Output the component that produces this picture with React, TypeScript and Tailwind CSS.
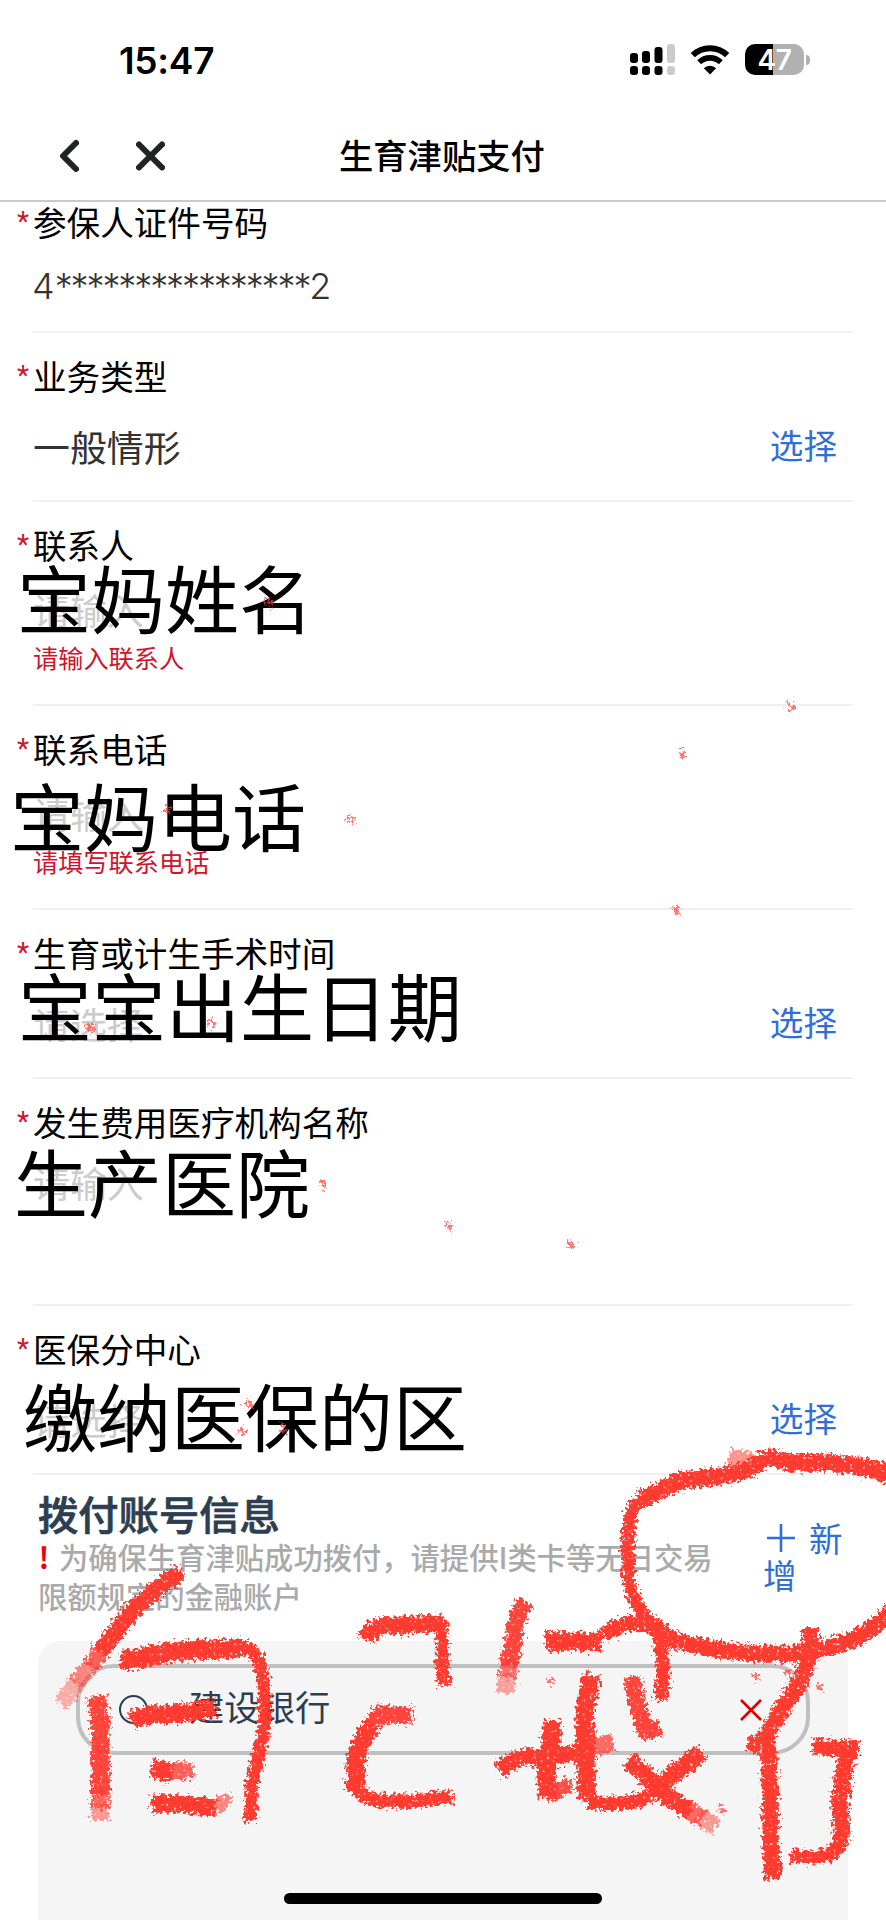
interface Field {
  label: string
  height: string
  value?: string
  placeholder?: string
  valueClass: string
  error?: string
  select?: boolean
}

const fields: Field[] = [
  { label: "业务类型", height: "h-[169px]", value: "一般情形", valueClass: "mt-[31px]", select: true },
  { label: "联系人", height: "h-[204px]", placeholder: "请输入", valueClass: "mt-[25px]", error: "请输入联系人" },
  { label: "联系电话", height: "h-[204px]", placeholder: "请输入", valueClass: "mt-[25px]", error: "请填写联系电话" },
  { label: "生育或计生手术时间", height: "h-[169px]", placeholder: "请选择", valueClass: "mt-[31px]", select: true },
  { label: "发生费用医疗机构名称", height: "h-[227px]", placeholder: "请输入", valueClass: "mt-[21px]" },
  { label: "医保分中心", height: "h-[169px]", placeholder: "请选择", valueClass: "mt-[31px]", select: true },
]

// Large captions laid over the form
const captions = [
  { text: "宝妈姓名", place: "left-[17px] top-[556px]" },
  { text: "宝妈电话", place: "left-[10px] top-[774px]" },
  { text: "宝宝出生日期", place: "left-[18px] top-[964px]" },
  { text: "生产医院", place: "left-[14px] top-[1140px]" },
  { text: "缴纳医保的区", place: "left-[23px] top-[1374px]" },
]

// Crayon strokes: [path, width, opacity]
const strokes: [string, number, number][] = [
  // circle round the add button
  ["M892 1476 Q875 1468 850 1465 T790 1463 L771 1457 L753 1466 Q735 1475 715 1477 T683 1480 Q668 1486 656 1492 L640 1500", 14, 1],
  ["M656 1492 Q634 1500 631 1514 Q627 1535 628 1570 Q629 1590 637 1604 Q645 1617 657 1627", 9, 1],
  ["M653 1624 Q665 1640 690 1644 Q735 1655 790 1654 Q830 1650 858 1637 Q878 1627 892 1610", 13, 1],
  ["M729 1458 L755 1463", 15, 0.55],
  // 自
  ["M181 1572 Q150 1592 131 1612 L100 1652", 14, 1],
  ["M107 1643 L90 1666", 14, 0.8],
  ["M92 1663 L76 1684", 14, 0.6],
  ["M78 1681 L61 1704", 14, 0.4],
  ["M121 1659 Q138 1660 150 1656 T200 1650 T242 1648", 16, 1],
  ["M240 1646 Q261 1650 263 1680 Q267 1715 263 1735 Q257 1760 252 1785 L250 1822", 9, 1],
  ["M97 1696 Q102 1725 100 1745 L101 1795", 15, 0.95],
  ["M101 1790 L100 1808", 15, 0.75],
  ["M100 1804 L100 1820", 15, 0.5],
  ["M132 1721 Q145 1714 165 1714 T216 1708", 15, 1],
  ["M152 1768 L172 1773", 15, 1],
  ["M168 1772 L193 1770", 13, 0.8],
  ["M152 1804 Q185 1803 216 1808", 14, 1],
  ["M212 1807 Q224 1806 224 1795", 11, 0.6],
  // 己
  ["M366 1639 Q371 1628 383 1626 L443 1623", 14, 1],
  ["M442 1620 L442 1655 L444 1686", 9, 1],
  ["M412 1716 L380 1714 L373 1724", 14, 0.95],
  ["M374 1725 Q360 1738 356 1760 L355 1790", 15, 1],
  ["M355 1786 Q363 1799 378 1800 Q410 1803 430 1799 L452 1797", 10, 1],
  // 的
  ["M526 1602 Q514 1618 514 1640 L509 1665", 14, 0.95],
  ["M510 1661 L508 1678", 14, 0.7],
  ["M508 1675 L505 1693", 14, 0.45],
  ["M545 1641 L602 1642", 15, 1],
  ["M604 1635 Q618 1624 632 1623 L653 1625", 12, 1],
  ["M650 1624 Q662 1635 662 1655 L663 1680 L660 1700", 10, 1],
  ["M593 1675 Q583 1705 585 1725 L587 1800", 15, 1],
  ["M588 1802 Q628 1807 648 1796 Q663 1784 676 1772", 10, 1],
  ["M666 1780 L702 1752", 14, 1],
  ["M499 1771 Q518 1754 535 1758 Q560 1757 590 1749", 13, 1],
  ["M588 1749 L613 1742", 14, 0.75],
  ["M552 1721 Q552 1748 546 1768 L548 1798", 15, 1],
  ["M547 1796 L571 1784", 12, 0.9],
  ["M632 1677 Q638 1712 646 1732 L660 1727", 13, 0.95],
  ["M628 1760 Q650 1778 658 1787 Q672 1802 690 1811", 14, 1],
  ["M686 1809 L702 1818", 14, 0.75],
  ["M699 1816 L716 1827", 14, 0.5],
  // 行
  ["M811 1628 Q811 1655 803 1675 Q797 1688 785 1704 L763 1741", 13, 1],
  ["M748 1743 L767 1747 Q770 1765 770 1790 L771 1845 L773 1879", 13, 1],
  ["M813 1747 L859 1749", 13, 1],
  ["M847 1753 Q843 1775 840 1800 L842 1840", 14, 1],
  ["M842 1834 Q841 1851 828 1855 Q810 1859 791 1856", 10, 1],
]

const specks = [
  [791, 706], [682, 754], [676, 910], [449, 1226], [571, 1244], [351, 820], [167, 810],
  [91, 1029], [212, 1023], [269, 602], [323, 1185], [248, 1404], [243, 1432], [283, 1428],
  [550, 1681], [756, 1677], [788, 1673], [820, 1688], [721, 1809],
]

function StatusBar() {
  return (
    <div className="flex h-[110px] items-center pt-[9px] pl-[119px] pr-[76px]">
      <span className="mt-[2px] font-[Inter] text-[37px] font-semibold leading-none tracking-[-0.300px]">15:47</span>
      <svg className="ml-auto" width="45" height="32" viewBox="0 0 45 32">
        <rect x="0" y="9" width="8" height="10" rx="3" />
        <rect x="12" y="7" width="8" height="12" rx="3" />
        <rect x="24.5" y="3" width="8" height="16" rx="3" />
        <rect x="37" y="0" width="8" height="19" rx="3" fill="#cbcbcb" />
        <rect x="0" y="22" width="8" height="9" rx="3" />
        <rect x="12" y="22" width="8" height="9" rx="3" />
        <rect x="24.5" y="22" width="8" height="9" rx="3" />
        <rect x="37" y="22" width="8" height="9" rx="3" fill="#cbcbcb" />
      </svg>
      <svg className="ml-[15px]" width="40" height="30" viewBox="0 0 40 30">
        <path d="M2.800 10.200a24.600 24.600 0 0 1 34.400 0" fill="none" stroke="#000" strokeWidth="6" />
        <path d="M9.200 17.200a15.600 15.600 0 0 1 21.600 0" fill="none" stroke="#000" strokeWidth="5.600" />
        <path d="M20 29.500l-6.200-6.200a8.800 8.800 0 0 1 12.400 0z" />
      </svg>
      <div className="ml-[15px] flex h-[31px] w-[59px] items-center justify-center rounded-[10px] bg-[linear-gradient(90deg,#000_28px,#b1b1b1_28px)]">
        <span className="font-[Inter] text-[28px] font-semibold leading-none tracking-[-0.500px] text-white">47</span>
      </div>
      <div className="ml-[2px] h-[10px] w-[4px] rounded-r-full bg-[#b1b1b1]" />
    </div>
  )
}

function NavBar() {
  return (
    <div className="flex h-[92px] items-center border-b-2 border-[#c9cacb] pl-[59px]">
      <svg className="mt-[2px]" width="20" height="34" viewBox="0 0 20 34" fill="none" stroke="#222325" strokeWidth="6" strokeLinecap="round" strokeLinejoin="round">
        <path d="M17 4L4 17l13 13" />
      </svg>
      <svg className="ml-[57px] mt-[2px]" width="29" height="30" viewBox="0 0 29 30" fill="none" stroke="#222325" strokeWidth="6" strokeLinecap="round">
        <path d="M3 3.500l23 23M26 3.500l-23 23" />
      </svg>
      <h1 className="-mt-[2px] ml-[174px] text-[34.300px] font-medium leading-[40px]">生育津贴支付</h1>
    </div>
  )
}

function FieldLabel({ text }: { text: string }) {
  return (
    <div className="flex h-[34px] items-center">
      <span className="-ml-[16px] w-[16px] font-[Roboto] text-[28px] leading-[34px] text-[#d0142c]">*</span>
      <span className="text-[33.600px] leading-[30px]">{text}</span>
    </div>
  )
}

function FormField({ field }: { field: Field }) {
  return (
    <div className={`mx-[33px] border-b-2 border-[#f0f0f0] pt-[26px] ${field.height}`}>
      <FieldLabel text={field.label} />
      <div className={`flex items-center justify-between pr-[16px] text-[36.900px] leading-[44px] ${field.valueClass}`}>
        {field.value && <span className="text-[#333]">{field.value}</span>}
        {field.placeholder && <span className="text-[#ccc]">{field.placeholder}</span>}
        {field.select && <button className="-mt-[3px] text-[33.600px] leading-[40px] text-[#2f6fd6]">选择</button>}
      </div>
      {field.error && <p className="mt-[11px] text-[25.200px] leading-[30px] text-[#d0142c]">{field.error}</p>}
    </div>
  )
}

function AccountSection() {
  return (
    <section>
      <div className="flex h-[166px] pl-[38px] pr-[34px] pt-[18px]">
        <div className="w-[690px]">
          <h2 className="text-[40.300px] font-medium leading-[40px] text-[#2c3e50] [-webkit-text-stroke:0.700px_#2c3e50]">拨付账号信息</h2>
          <p className="mt-[4px] whitespace-nowrap text-[29.300px] font-medium leading-[38.500px] text-[#aaa]">
            <span className="mr-[9px] inline-block w-[12px] text-center font-bold text-[#f00000]">!</span>
            为确保生育津贴成功拨付，请提供I类卡等无日交易
            <br />
            限额规定的金融账户
          </p>
        </div>
        <button className="ml-[35px] mt-[25px] flex h-[76px] w-[88px] flex-wrap items-center gap-x-[14px] text-left text-[33.600px] leading-[36px] text-[#2f6fd6]">
          <svg className="ml-[4px]" width="28" height="28" viewBox="0 0 28 28" stroke="currentColor" strokeWidth="2.600">
            <path d="M14 0v28M0 14h28" />
          </svg>
          <span>新</span>
          <span className="-mt-[2px]">增</span>
        </button>
      </div>
      <div className="mx-[38px] h-[280px] rounded-t-[22px] bg-[#f5f5f5] px-[38px] pt-[23px]">
        <div className="flex h-[91px] items-center rounded-[38px] border-4 border-[#c0c0c0] pl-[39px] pr-[44px]">
          <span className="h-[29px] w-[29px] rounded-full border-2 border-[#2c3e50]" />
          <span className="-mt-[7px] ml-[41px] text-[35.300px] leading-[40px] text-[#2c3e50]">建设银行</span>
          <svg className="ml-auto" width="22" height="22" viewBox="0 0 22 22" stroke="#dd0000" strokeWidth="2.600">
            <path d="M1 1l20 20M21 1L1 21" />
          </svg>
        </div>
      </div>
    </section>
  )
}

function CrayonLayer() {
  return (
    <svg className="pointer-events-none absolute left-0 top-0" width="886" height="1920" viewBox="0 0 886 1920" fill="none">
      <defs>
        <filter id="crayon" filterUnits="userSpaceOnUse" x="0" y="560" width="886" height="1360" colorInterpolationFilters="sRGB">
          <feTurbulence type="fractalNoise" baseFrequency="0.3" numOctaves="3" seed="4" result="noise" />
          <feDisplacementMap in="SourceGraphic" in2="noise" scale="14" xChannelSelector="R" yChannelSelector="G" result="rough" />
          <feColorMatrix in="noise" type="matrix" values="0 0 0 0 0  0 0 0 0 0  0 0 0 0 0  0 0 4 0 -0.400" result="grain" />
          <feComposite in="rough" in2="grain" operator="in" result="grainy" />
          <feGaussianBlur in="grainy" stdDeviation="0.7" />
        </filter>
      </defs>
      <g filter="url(#crayon)" stroke="#ff3b30" strokeLinecap="butt" strokeLinejoin="round">
        {strokes.map(([d, width, opacity]) => (
          <path key={d} d={d} strokeWidth={width + 3.5} opacity={opacity} />
        ))}
        {specks.map(([x, y]) => (
          <path key={`${x}-${y}`} d={`M${x - 3} ${y - 3}l4 3l1 4`} strokeWidth={4.5} opacity={0.7} />
        ))}
      </g>
    </svg>
  )
}

export default function App() {
  return (
    <div className="relative h-[1920px] w-[886px] overflow-hidden bg-white font-['Noto_Sans_CJK_SC',sans-serif] text-black">
      <StatusBar />
      <NavBar />
      <div className="mx-[33px] h-[131px] border-b-2 border-[#f0f0f0] pt-[3px]">
        <FieldLabel text="参保人证件号码" />
        <p className="-ml-px mt-[25px] flex whitespace-nowrap font-['Inter'] text-[36px] font-light leading-[44px] text-[#333]">
          <span>4</span>
          <span className="tracking-[-2.100px]">****************</span>
          <span>2</span>
        </p>
      </div>
      {fields.map((field) => (
        <FormField key={field.label} field={field} />
      ))}
      <AccountSection />

      {captions.map((caption) => (
        <span key={caption.text} className={`absolute whitespace-nowrap text-[74px] leading-[80px] ${caption.place}`}>
          {caption.text}
        </span>
      ))}
      <CrayonLayer />
      <div className="absolute bottom-[16px] left-[284px] h-[11px] w-[318px] rounded-full bg-black" />
    </div>
  )
}
